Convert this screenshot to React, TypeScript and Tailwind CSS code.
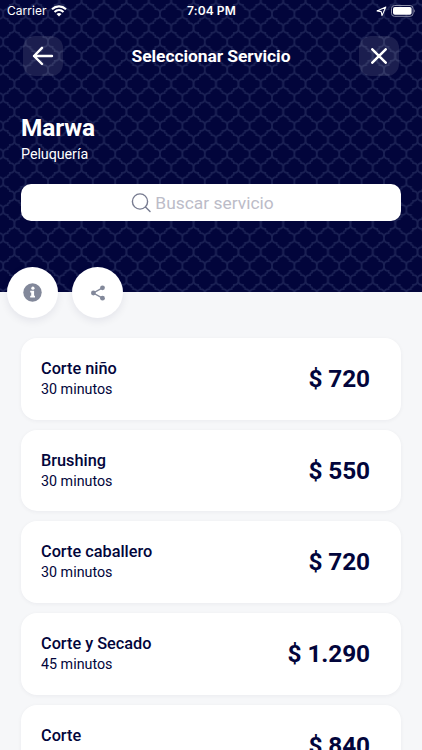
import React from "react";

const services = [
  { name: "Corte niño", time: "30 minutos", price: "$ 720" },
  { name: "Brushing", time: "30 minutos", price: "$ 550" },
  { name: "Corte caballero", time: "30 minutos", price: "$ 720" },
  { name: "Corte y Secado", time: "45 minutos", price: "$ 1.290" },
  { name: "Corte", time: "30 minutos", price: "$ 840" },
];

// One lattice edge, mirrored four ways to make a repeating tile.
function Lattice() {
  const edge = "M0 0C0 3.6 1.6 5 4.6 4.9V6.2C4.6 6.8 4.9 7 5.6 7C6.3 7 6.6 7.2 6.6 7.8V9.1C9.6 9 11.2 10.4 11.2 14";
  return (
    <svg className="absolute inset-0 h-full w-full" aria-hidden="true">
      <defs>
        <pattern id="lattice" width="22.4" height="28" x="249.6" y="126" patternUnits="userSpaceOnUse">
          <g fill="none" stroke="#1b2154" strokeWidth="1.6">
            <path d={edge} />
            <path d={edge} transform="translate(22.4 0) scale(-1 1)" />
            <path d={edge} transform="translate(0 28) scale(1 -1)" />
            <path d={edge} transform="translate(22.4 28) scale(-1 -1)" />
          </g>
        </pattern>
      </defs>
      <rect width="100%" height="100%" fill="url(#lattice)" />
    </svg>
  );
}

function StatusBar() {
  return (
    <div className="grid h-[22px] grid-cols-3 items-center pl-[7px] pr-[6px] font-['Inter',sans-serif] text-[12px] leading-[22px]">
      <div className="flex items-center gap-[4px]">
        <span className="tracking-[0.05px]">Carrier</span>
        <svg width="16" height="12" viewBox="0 0 16 12" fill="none" stroke="white" strokeWidth="2.1">
          <path d="M1 4.2C5 .4 11 .4 15 4.2" />
          <path d="M3.5 7C6.2 4.5 9.8 4.5 12.5 7" />
          <path d="M5.5 9Q8 7 10.5 9L8 11.6Z" fill="white" stroke="none" />
        </svg>
      </div>
      <span className="text-center font-semibold tracking-[0.1px]">7:04 PM</span>
      <div className="flex items-center justify-end gap-[4px]">
        <svg width="11" height="11" viewBox="0 0 11 11" fill="none" stroke="white" strokeWidth="1.1" strokeLinejoin="round">
          <path d="M9.8 1L1 4.9L5.2 5.6L6 9.6Z" />
        </svg>
        <svg width="25" height="12" viewBox="0 0 25 12">
          <rect x=".5" y=".5" width="21.6" height="10.8" rx="3" fill="none" stroke="#8b8ea8" />
          <rect x="2" y="2" width="18.6" height="7.8" rx="1.8" fill="white" />
          <path d="M23.2 4Q25 5.9 23.2 7.8Z" fill="#8b8ea8" />
        </svg>
      </div>
    </div>
  );
}

export default function App() {
  return (
    <div className="h-[750px] w-full overflow-hidden bg-[#f6f7f9] font-['Roboto',sans-serif] text-[#02053b]">
      <header className="relative h-[292px] bg-[#02053b] text-white">
        <Lattice />
        <div className="relative">
          <StatusBar />
          <div className="mt-[14px] flex items-center justify-between pl-[23px] pr-[23px]">
            <button aria-label="Volver" className="flex size-[40px] items-center justify-center rounded-[12px] bg-white/10">
              <svg width="22" height="20" viewBox="0 0 22 20" fill="none" stroke="white" strokeWidth="2.4" strokeLinecap="round" strokeLinejoin="round">
                <path d="M20 10H2M10 1.8L2 10L10 18" />
              </svg>
            </button>
            <h1 className="text-[17.4px] font-bold tracking-[-0.05px]">Seleccionar Servicio</h1>
            <button aria-label="Cerrar" className="flex size-[40px] items-center justify-center rounded-[12px] bg-white/10">
              <svg width="16" height="16" viewBox="0 0 16 16" stroke="white" strokeWidth="2.5" strokeLinecap="round">
                <path d="M1.3 1.3L14.7 14.7M14.7 1.3L1.3 14.7" />
              </svg>
            </button>
          </div>
          <div className="px-[21px] pt-[37px]">
            <h2 className="text-[24.4px] font-bold leading-[30px] tracking-[-0.1px]">Marwa</h2>
            <p className="mt-[1px] text-[14.3px] leading-[20px] tracking-[-0.05px]">Peluquería</p>
            <div className="mt-[20px] flex h-[37px] items-center justify-center gap-[4px] rounded-[10px] bg-white pr-[17px] text-[17.4px] text-[#bcbcc8]">
              <svg width="20" height="20" viewBox="0 0 20 20" fill="none" stroke="#777b90" strokeWidth="1.4" strokeLinecap="round">
                <circle cx="9" cy="8.5" r="7.6" />
                <path d="M14.5 14L19 18.5" />
              </svg>
              <span className="pt-px">Buscar servicio</span>
            </div>
          </div>
        </div>
      </header>
      <div className="relative -mt-[25px] flex gap-[14px] pl-[7.4px]">
        <button aria-label="Información" className="flex size-[51px] items-center justify-center rounded-full bg-white shadow-[0_3px_8px_rgba(2,5,59,0.08)]">
          <svg width="19" height="19" viewBox="0 0 19 19">
            <circle cx="9.5" cy="9.5" r="9.2" fill="#82889a" />
            <circle cx="9.9" cy="5.2" r="1.6" fill="white" />
            <path d="M7.2 7.8H11.1V12.8H12V14.4H7.2V12.8H8.2V9.4H7.2Z" fill="white" />
          </svg>
        </button>
        <button aria-label="Compartir" className="flex size-[51px] items-center justify-center rounded-full bg-white shadow-[0_3px_8px_rgba(2,5,59,0.08)]">
          <svg width="14" height="16" viewBox="0 0 14 16" fill="#82889a">
            <path d="M11.5 2.8L2.3 8L11.5 13.2" fill="none" stroke="#82889a" strokeWidth="1.4" />
            <circle cx="11.5" cy="2.8" r="2.4" />
            <circle cx="2.4" cy="8" r="2.4" />
            <circle cx="11.5" cy="13.2" r="2.4" />
          </svg>
        </button>
      </div>
      <main className="flex flex-col gap-[10px] px-[21px] pt-[20px]">
        {services.map((s) => (
          <article key={s.name} className="flex h-[81.7px] shrink-0 items-center justify-between rounded-[16px] bg-white pl-[20px] pr-[31px] shadow-[0_1px_4px_rgba(2,5,59,0.05)]">
            <div>
              <h3 className="text-[16.3px] font-medium leading-[22px]">{s.name}</h3>
              <p className="text-[14.3px] leading-[19.5px]">{s.time}</p>
            </div>
            <span className="pt-[0.6px] text-[24.4px] font-bold tracking-[-0.1px]">{s.price}</span>
          </article>
        ))}
      </main>
    </div>
  );
}
